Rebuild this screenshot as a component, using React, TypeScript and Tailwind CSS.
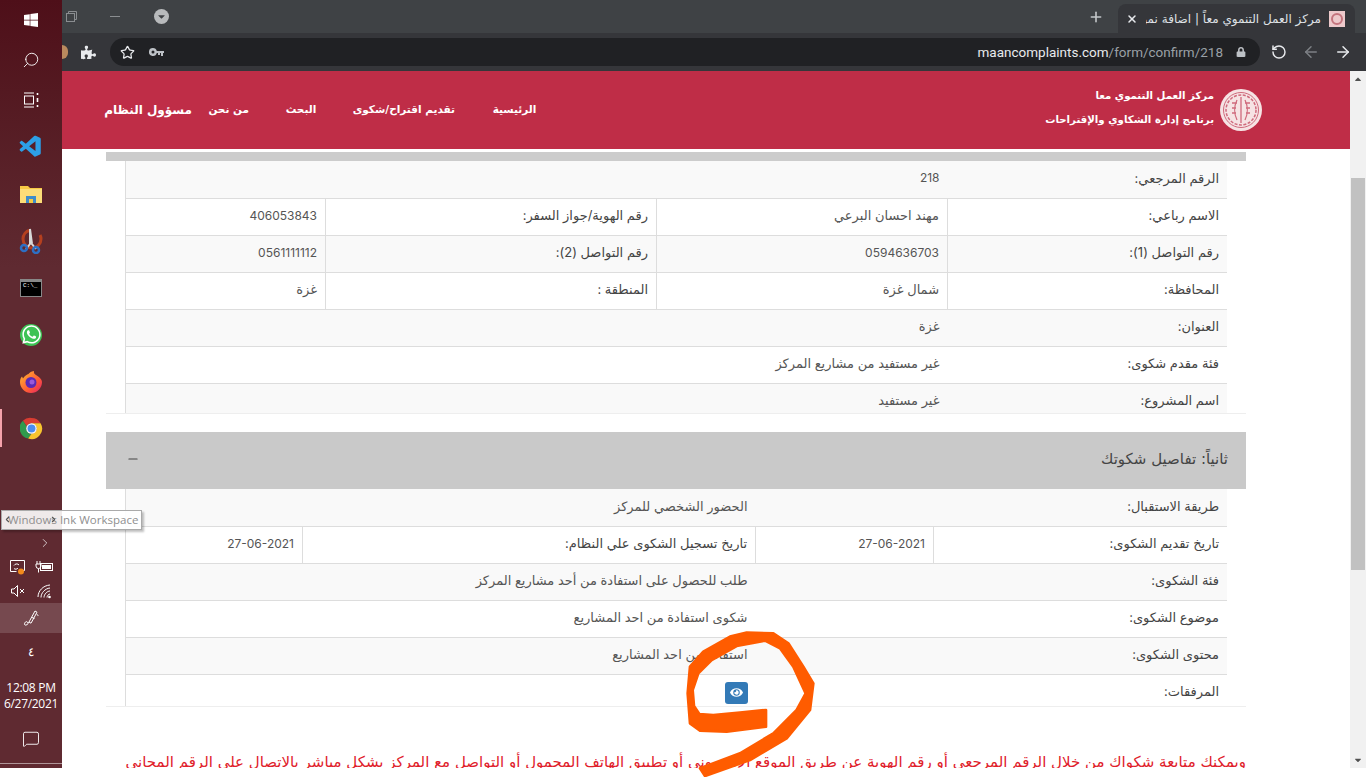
import React from 'react';
import { ArrowLeft, ArrowRight, RotateCcw, Plus, X, Star, ChevronRight, ChevronLeft, Minus, Search, MessageSquare } from 'lucide-react';
import { FaEye, FaWhatsapp, FaWindows, FaPuzzlePiece, FaLock, FaCaretDown, FaCaretUp } from 'react-icons/fa';
import { VscVscode } from 'react-icons/vsc';

const font = 'font-["DejaVu_Sans","Noto_Sans",sans-serif]';
const tableFont = 'font-["Inter","DejaVu_Sans",sans-serif]';

const VsCodeIcon = () => <VscVscode className="w-[26px] h-[26px] text-[#2d9fe6]" />;

const FolderIcon = () => (
  <svg width="24" height="20" viewBox="0 0 24 20">
    <path d="M1 2h8l2 2h12v15H1z" fill="#f6c945" />
    <rect x="1" y="5" width="22" height="14" fill="#fcdc78" />
    <rect x="7" y="12" width="10" height="7" fill="#3f8cc9" />
    <rect x="10" y="15" width="4" height="4" fill="#f6c945" />
  </svg>
);

const SnipIcon = () => (
  <svg width="24" height="26" viewBox="0 0 24 26">
    <circle cx="13" cy="11" r="9" fill="none" stroke="#b5401f" strokeWidth="3" strokeDasharray="40 12" />
    <path d="M11 1 L11 16 L7 21 M11 1 L13 16 L17 21" stroke="#d8d8d8" strokeWidth="2" fill="none" />
    <circle cx="5" cy="20" r="3" fill="none" stroke="#2d6fc4" strokeWidth="2.5" />
    <circle cx="17" cy="22" r="3" fill="none" stroke="#2d6fc4" strokeWidth="2.5" />
  </svg>
);

const CmdIcon = () => (
  <div className="w-[22px] h-[18px] bg-black border border-[#888] border-t-[3px] flex items-start">
    <span className="text-[6px] leading-[8px] text-white font-['Liberation_Mono',monospace] pl-[2px]">C:\_</span>
  </div>
);

const FirefoxIcon = () => (
  <svg width="24" height="24" viewBox="0 0 24 24">
    <defs>
      <linearGradient id="ff" x1="0" y1="0" x2="1" y2="1">
        <stop offset="0" stopColor="#ffbd2e" />
        <stop offset="0.6" stopColor="#ff5a36" />
        <stop offset="1" stopColor="#e3226a" />
      </linearGradient>
    </defs>
    <path d="M12 23a11 11 0 0 1-11-11c0-2.5.8-4.4 2-5.6l1 2C5.5 6 8 4.500 9.500 4 10 3 12 1.500 15 1c-.5 2 .5 3 2 4 3 2 6 4 6 7a11 11 0 0 1-11 11z" fill="url(#ff)" />
    <circle cx="12" cy="12.500" r="5.500" fill="#5b2ab5" />
    <circle cx="13" cy="12" r="2.500" fill="#9a59d9" />
  </svg>
);

const ChromeIcon = () => (
  <svg width="23" height="23" viewBox="0 0 24 24">
    <path d="M12 1a11 11 0 0 1 9.500 5.500H12a5.500 5.500 0 0 0-5 3.200L3 3.800A11 11 0 0 1 12 1z" fill="#d93d32" />
    <path d="M3 3.800 L7 9.700 a5.500 5.500 0 0 0 5 7.800 L8.500 22.500 A11 11 0 0 1 3 3.800z" fill="#2f9a4d" />
    <path d="M21.500 6.500 A11 11 0 0 1 8.500 22.500 L12 17.500 a5.500 5.500 0 0 0 4.500-8.500 L12 6.500z" fill="#f7c52f" />
    <circle cx="12" cy="12" r="5.500" fill="#fff" />
    <circle cx="12" cy="12" r="4.200" fill="#4a8df0" />
  </svg>
);

const Logo = () => (
  <svg width="44" height="44" viewBox="0 0 44 44">
    <circle cx="22" cy="22" r="21" fill="#f6e3e4" />
    <circle cx="22" cy="22" r="17.500" fill="none" stroke="#cf6a7c" strokeWidth="1" />
    <circle cx="22" cy="22" r="15" fill="none" stroke="#cf6a7c" strokeWidth="1.500" strokeDasharray="3 1.500" />
    <path d="M22 9v26M18 12c-3 6-3 14 0 20M26 12c3 6 3 14 0 20M13 15h5M13 20h4M13 25h4M26 15h5M27 20h4M27 25h4" stroke="#cf6a7c" strokeWidth="1.300" fill="none" />
  </svg>
);

const TrayScreen = () => (
  <svg width="18" height="16" viewBox="0 0 18 16" fill="none" stroke="#fff" strokeWidth="1">
    <path d="M2.500 1.500h14v10h-4M2.500 1.500v11h6" />
    <path d="M6 6.500c1-2 4-2 5-.5M10 9c-1 1.500-3 1.500-4 .5" />
    <circle cx="13" cy="12.500" r="3" fill="#f28a1c" stroke="none" />
  </svg>
);

const TrayBattery = () => (
  <svg width="20" height="14" viewBox="0 0 20 14" fill="none" stroke="#fff" strokeWidth="1">
    <path d="M3 1v3M6 1v3M2 4h5v2a2.500 2.500 0 0 1-5 0zM4.500 8.500v4" />
    <rect x="6.500" y="3.500" width="12" height="7" />
    <rect x="8" y="5" width="9" height="4" fill="#fff" stroke="none" />
  </svg>
);

const TrayMute = () => (
  <svg width="16" height="14" viewBox="0 0 16 14" fill="none" stroke="#fff" strokeWidth="1">
    <path d="M1.500 5h2.500l3.500-3.500v11L4 9H1.500z" />
    <path d="M10 5l4 4M14 5l-4 4" />
  </svg>
);

const TrayWifi = () => (
  <svg width="15" height="15" viewBox="0 0 15 15" fill="none" stroke="#fff" strokeWidth="1">
    <path d="M1 13C1 7 6 1.500 13 1" />
    <path d="M4 13.500C4 9 8 4.500 13 4" />
    <path d="M7 13.500c0-3 3-6.500 6-6.500" />
    <path d="M10 13.500c0-1.500 1.500-3.500 3-3.500" />
    <circle cx="12.500" cy="13" r="1.300" fill="#fff" stroke="none" />
  </svg>
);

const TrayPen = () => (
  <svg width="18" height="18" viewBox="0 0 18 18" fill="none" stroke="#fff" strokeWidth="1">
    <path d="M7 13l6-11 2 1.200-6 11z" />
    <path d="M10 8.500l2.500 1M14.500 5c1 .5 1.500 1 1.500 2" />
    <path d="M7 13c-1 2.500-3 3.500-4 3-1-.5-.5-2 .5-3s2 0 2.500 1" />
  </svg>
);

const Taskbar = () => (
  <aside className="w-[62px] shrink-0 h-full flex flex-col text-white bg-gradient-to-b from-[#4e0f19] via-[#5f2a31] to-[#5f2a31] via-35%">
    <div className="h-10 flex items-center justify-center">
      <FaWindows className="w-4 h-4" />
    </div>
    <div className="h-10 flex items-center justify-center">
      <Search className="w-[18px] h-[18px] -scale-x-100" strokeWidth={1.2} />
    </div>
    <div className="h-10 flex items-center justify-center">
      <svg width="16" height="16" viewBox="0 0 16 16" fill="none" stroke="#fff" strokeWidth="1">
        <path d="M1 1h10M1 15h10" />
        <rect x="1.500" y="4" width="9" height="8" />
        <path d="M14.500 1v2M14.500 6v4M14.500 13v2" strokeWidth="1.600" />
      </svg>
    </div>
    <div className="mt-[3px] flex flex-col">
      {[<VsCodeIcon />, <FolderIcon />, <SnipIcon />, <CmdIcon />].map((icon, i) => (
        <div key={i} className="h-[47px] flex items-center justify-center">{icon}</div>
      ))}
      <div className="h-[47px] flex items-center justify-center">
        <div className="w-[22px] h-[22px] rounded-full bg-[#3ec355] flex items-center justify-center">
          <FaWhatsapp className="w-[21px] h-[21px] text-white" />
        </div>
      </div>
      <div className="h-[47px] flex items-center justify-center"><FirefoxIcon /></div>
      <div className="h-[47px] flex items-center justify-center relative">
        <span className="absolute left-0 top-[4px] w-[2px] h-[38px] bg-[#f4a2ab]" />
        <ChromeIcon />
      </div>
    </div>
    <div className="mt-auto flex flex-col items-center">
      <div className="w-full flex justify-end pr-[10px] mb-[5px]">
        <ChevronRight className="w-[14px] h-[14px]" strokeWidth={1.2} />
      </div>
      <div className="flex items-center gap-[8px] h-[24px]">
        <TrayScreen />
        <TrayBattery />
      </div>
      <div className="flex items-center gap-[11px] h-[24px]">
        <TrayMute />
        <TrayWifi />
      </div>
      <div className="w-full h-[30px] bg-white/15 flex items-center justify-center">
        <TrayPen />
      </div>
      <div className="h-[38px] flex items-center text-[12px] font-['Liberation_Sans',sans-serif]">٤</div>
      <div className="text-[12px] leading-[16px] text-center font-['Open_Sans',sans-serif] mt-[9px] mb-[3px] tracking-[-0.3px] whitespace-nowrap">
        <div>12:08 PM</div>
        <div>6/27/2021</div>
      </div>
      <div className="h-[48px] flex items-center">
        <MessageSquare className="w-[18px] h-[18px]" strokeWidth={1.2} />
      </div>
      <div className="w-full h-[5px] border-t border-white/50" />
    </div>
  </aside>
);

const BrowserChrome = () => (
  <div className="shrink-0 text-[#e8eaed]">
    <div className="h-[33px] bg-[#3f4245] flex items-center relative">
      <svg width="11" height="11" viewBox="0 0 11 11" fill="none" stroke="#8a8d90" strokeWidth="1" className="ml-[4px]">
        <rect x="0.500" y="2.500" width="8" height="8" />
        <path d="M2.500 2.500v-2h8v8h-2" />
      </svg>
      <div className="w-[10px] h-px bg-[#8a8d90] ml-[33px]" />
      <div className="w-[15px] h-[15px] rounded-full bg-[#b8babc] ml-[34px] flex items-center justify-center">
        <FaCaretDown className="w-[11px] h-[11px] text-[#3f4245]" />
      </div>
      <Plus className="w-[16px] h-[16px] ml-auto mr-[14px] text-[#c4c7ca]" strokeWidth={2.4} />
      <div dir="rtl" className="w-[237px] mr-[11px] h-[29px] mt-[4px] bg-[#35363a] rounded-t-lg flex items-center pr-[10px] pl-[8px] gap-[8px]">
        <div className="w-4 h-4 bg-[#edc9cb] flex items-center justify-center shrink-0">
          <div className="w-3 h-3 rounded-full border-2 border-[#c4747d]" />
        </div>
        <span className={`text-[12px] whitespace-nowrap overflow-hidden flex-1 ${font} text-[#dfe1e5]`}>مركز العمل التنموي معاً | اضافة نمو</span>
        <X className="w-[12px] h-[12px] shrink-0" strokeWidth={3} />
      </div>
    </div>
    <div className="h-[38px] bg-[#35363a] flex items-center">
      <div className="w-[6px] h-[14px] bg-[#b98a5e] rounded-r-full" />
      <FaPuzzlePiece className="w-[15px] h-[15px] ml-[13px] text-[#e8eaed]" />
      <div className="ml-[14px] w-[1150px] h-[28px] bg-[#202124] rounded-full flex items-center pl-[10px] pr-[14px]">
        <Star className="w-[15px] h-[15px]" strokeWidth={2} />
        <svg width="15" height="9" viewBox="0 0 15 9" className="ml-[14px]" fill="#bdc1c6">
          <path d="M4 0a4 4 0 0 1 3.800 3H15v2h-1v3h-2V5h-1v2H9V5H7.800A4 4 0 1 1 4 0zm0 2.500a1.500 1.500 0 1 0 0 3 1.500 1.500 0 0 0 0-3z" />
        </svg>
        <span className="ml-auto text-[13.500px] font-['Roboto',sans-serif] whitespace-nowrap">
          maancomplaints.com<span className="text-[#9aa0a6]">/form/confirm/218</span>
        </span>
        <FaLock className="w-[10px] h-[10px] ml-[13px] text-[#bdc1c6]" />
      </div>
      <RotateCcw className="w-[16px] h-[16px] ml-[11px]" strokeWidth={2.2} />
      <ArrowLeft className="w-[18px] h-[18px] ml-[15px] text-[#7d8085]" strokeWidth={2} />
      <ArrowRight className="w-[18px] h-[18px] ml-[14px]" strokeWidth={2} />
    </div>
  </div>
);

const Navbar = () => (
  <header className={`h-[78px] shrink-0 bg-[#bf2d47] text-white flex items-center pl-[44px] pr-[92px] ${font}`}>
    <nav dir="rtl" className="flex items-center text-[10.500px] font-bold whitespace-nowrap flex-row-reverse">
      <span className="w-[86px] text-center text-[12px]">مسؤول النظام</span>
      <span className="w-[38px] text-center ml-[19px] mr-0">من نحن</span>
      <span className="w-[26px] text-center ml-[39px] flex justify-center">البحث</span>
      <span className="w-[101px] text-center ml-[40px]">تقديم اقتراح/شكوى</span>
      <span className="w-[39px] text-center ml-[40px] flex justify-center">الرئيسية</span>
    </nav>
    <div dir="rtl" className="ml-auto flex items-center gap-[5px] mr-[-5px] font-bold">
      <Logo />
      <div className="flex flex-col gap-[9px] pb-[6px] text-[10.200px] leading-[15px] whitespace-nowrap">
        <span>مركز العمل التنموي معا</span>
        <span>برنامج إدارة الشكاوي والإقتراحات</span>
      </div>
    </div>
  </header>
);

type Row = { cells: string[] };

const cellClass = 'px-2 pb-[2px] h-[37px] border-b border-[#ddd] align-middle whitespace-nowrap overflow-hidden';

// digits in the picture run narrower than the Arabic beside them
const valueClass = (value: string) => (/^[\d-]+$/.test(value) ? 'text-[12px] text-[#555]' : 'text-[#555]');

const firstRows: Row[] = [
  { cells: ['الرقم المرجعي:', '218'] },
  { cells: ['الاسم رباعي:', 'مهند احسان البرعي', 'رقم الهوية/جواز السفر:', '406053843'] },
  { cells: ['رقم التواصل (1):', '0594636703', 'رقم التواصل (2):', '0561111112'] },
  { cells: ['المحافظة:', 'شمال غزة', 'المنطقة :', 'غزة'] },
  { cells: ['العنوان:', 'غزة'] },
  { cells: ['فئة مقدم شكوى:', 'غير مستفيد من مشاريع المركز'] },
  { cells: ['اسم المشروع:', 'غير مستفيد'] },
];

const FirstTable = () => (
  <div className="h-[252px] overflow-hidden mx-[19px]">
    <table dir="rtl" className={`w-[1102px] table-fixed border-x border-[#ddd] text-[13px] text-[#444] ${tableFont}`}>
      <colgroup>
        <col className="w-[280px]" />
        <col className="w-[291px]" />
        <col className="w-[331px]" />
        <col className="w-[200px]" />
      </colgroup>
      <tbody>
        {firstRows.map((row, i) => (
          <tr key={i} className={i % 2 === 0 ? 'bg-[#f9f9f9]' : 'bg-white'}>
            <td className={cellClass}>{row.cells[0]}</td>
            {row.cells.length === 2 ? (
              <td colSpan={3} className={cellClass + ' ' + valueClass(row.cells[1])}>{row.cells[1]}</td>
            ) : (
              <>
                <td className={cellClass + ' border-r ' + valueClass(row.cells[1])}>{row.cells[1]}</td>
                <td className={cellClass + ' border-r'}>{row.cells[2]}</td>
                <td className={cellClass + ' border-r ' + valueClass(row.cells[3])}>{row.cells[3]}</td>
              </>
            )}
          </tr>
        ))}
      </tbody>
    </table>
  </div>
);

const secondRows: Row[] = [
  { cells: ['طريقة الاستقبال:', 'الحضور الشخصي للمركز'] },
  { cells: ['تاريخ تقديم الشكوى:', '27-06-2021', 'تاريخ تسجيل الشكوى علي النظام:', '27-06-2021'] },
  { cells: ['فئة الشكوى:', 'طلب للحصول على استفادة من أحد مشاريع المركز'] },
  { cells: ['موضوع الشكوى:', 'شكوى استفادة من احد المشاريع'] },
  { cells: ['محتوى الشكوى:', 'استفادة من احد المشاريع'] },
];

const SecondTable = () => (
  <div className="h-[217px] overflow-hidden mx-[19px]">
    <table dir="rtl" className={`w-[1102px] table-fixed border-x border-[#ddd] text-[13px] text-[#444] ${tableFont}`}>
      <colgroup>
        <col className="w-[294px]" />
        <col className="w-[178px]" />
        <col className="w-[453px]" />
        <col className="w-[177px]" />
      </colgroup>
      <tbody>
        {secondRows.map((row, i) => (
          <tr key={i} className={i % 2 === 0 ? 'bg-[#f9f9f9]' : 'bg-white'}>
            {row.cells.length === 2 ? (
              <>
                <td colSpan={2} className={cellClass}>{row.cells[0]}</td>
                <td colSpan={2} className={cellClass + ' text-[#555]'}>{row.cells[1]}</td>
              </>
            ) : (
              <>
                <td className={cellClass}>{row.cells[0]}</td>
                <td className={cellClass + ' border-r ' + valueClass(row.cells[1])}>{row.cells[1]}</td>
                <td className={cellClass + ' border-r'}>{row.cells[2]}</td>
                <td className={cellClass + ' border-r ' + valueClass(row.cells[3])}>{row.cells[3]}</td>
              </>
            )}
          </tr>
        ))}
        <tr className="bg-white">
          <td colSpan={2} className={cellClass}>المرفقات:</td>
          <td colSpan={2} className="px-2 h-[37px] border-b border-[#ddd] align-middle">
            <span className="w-[23px] h-[22px] bg-[#337ab7] rounded-[3px] flex items-center justify-center">
              <FaEye className="w-[13px] h-[13px] text-white" />
            </span>
          </td>
        </tr>
      </tbody>
    </table>
  </div>
);

// hand drawn mark on top of the screenshot, traced as an outline because its width varies
const Scribble = () => (
  <svg className="absolute left-[640px] top-[620px] pointer-events-none" width="200" height="157" viewBox="0 0 600 471">
    <path
      d="M378 270 L300 278 L220 285 L178 282 L162 258 L158 210 L175 160 L215 120 L290 78 L375 62 L420 85 L460 140 L497 220 L470 270 L400 340 L300 400 L180 445 L195 468 L330 420 L440 355 L510 270 L520 190 L490 140 L445 70 L400 40 L320 38 L270 50 L190 95 L150 140 L143 220 L150 310 L180 332 L260 335 L378 320 Z"
      fill="#ff5c00"
      stroke="#ff5c00"
      strokeWidth="8"
      strokeLinejoin="round"
    />
  </svg>
);

const Scrollbar = () => (
  <div className="w-4 shrink-0 bg-[#f1f1f1] flex flex-col items-center">
    <FaCaretUp className="w-[10px] h-[10px] mt-[3px] text-[#505050]" />
    <div className="w-[14px] h-[392px] mt-[94px] bg-[#c1c1c1]" />
    <FaCaretDown className="w-[10px] h-[10px] mt-auto mb-[3px] text-[#505050]" />
  </div>
);

export default function App() {
  return (
    <div className="h-[777px] w-[1366px] overflow-hidden bg-white relative">
      <div className="h-[768px] flex relative overflow-hidden">
        <Taskbar />
        <div className="flex-1 min-w-0 flex flex-col">
          <BrowserChrome />
          <div className="flex-1 min-h-0 flex">
            <main className="flex-1 min-w-0 flex flex-col overflow-hidden">
              <Navbar />
              <div className="pl-[44px] pr-[104px] flex flex-col">
                <div className="h-[9px] mt-[3px] bg-[#ccc]" />
                <FirstTable />
                <div className="h-px bg-[#eee]" />
                <div dir="rtl" className={`h-[57px] mt-[18px] pb-[3px] bg-[#c9c9c9] flex items-center justify-between pr-[18px] pl-[20px] text-[15px] text-[#444] ${font}`}>
                  <span>ثانياً: تفاصيل شكوتك</span>
                  <Minus className="w-[14px] h-[14px]" strokeWidth={2} />
                </div>
                <SecondTable />
                <div className="h-px bg-[#eee]" />
                <p dir="rtl" className={`mt-[43px] text-[15px] leading-[24px] text-[#e0202a] whitespace-nowrap overflow-hidden ${font}`}>
                  ويمكنك متابعة شكواك من خلال الرقم المرجعي أو رقم الهوية عن طريق الموقع الإلكتروني أو تطبيق الهاتف المحمول أو التواصل مع المركز بشكل مباشر بالاتصال على الرقم المجاني
                </p>
              </div>
            </main>
            <Scrollbar />
          </div>
        </div>
        <div className="absolute left-[1px] top-[510px] h-[20px] w-[141px] bg-white/90 border border-[#aaa] shadow-[2px_2px_2px_rgba(0,0,0,0.25)] text-[11.500px] leading-[18px] text-[#8f8f8f] pl-[6px] font-['Open_Sans',sans-serif] whitespace-nowrap">
          Windows Ink Workspace
          <ChevronLeft className="absolute left-[1px] top-[4px] w-[9px] h-[9px] text-[#555]" strokeWidth={3} />
          <ChevronRight className="absolute left-[47px] top-[4px] w-[9px] h-[9px] text-[#555]" strokeWidth={3} />
        </div>
      </div>
      <Scribble />
    </div>
  );
}
